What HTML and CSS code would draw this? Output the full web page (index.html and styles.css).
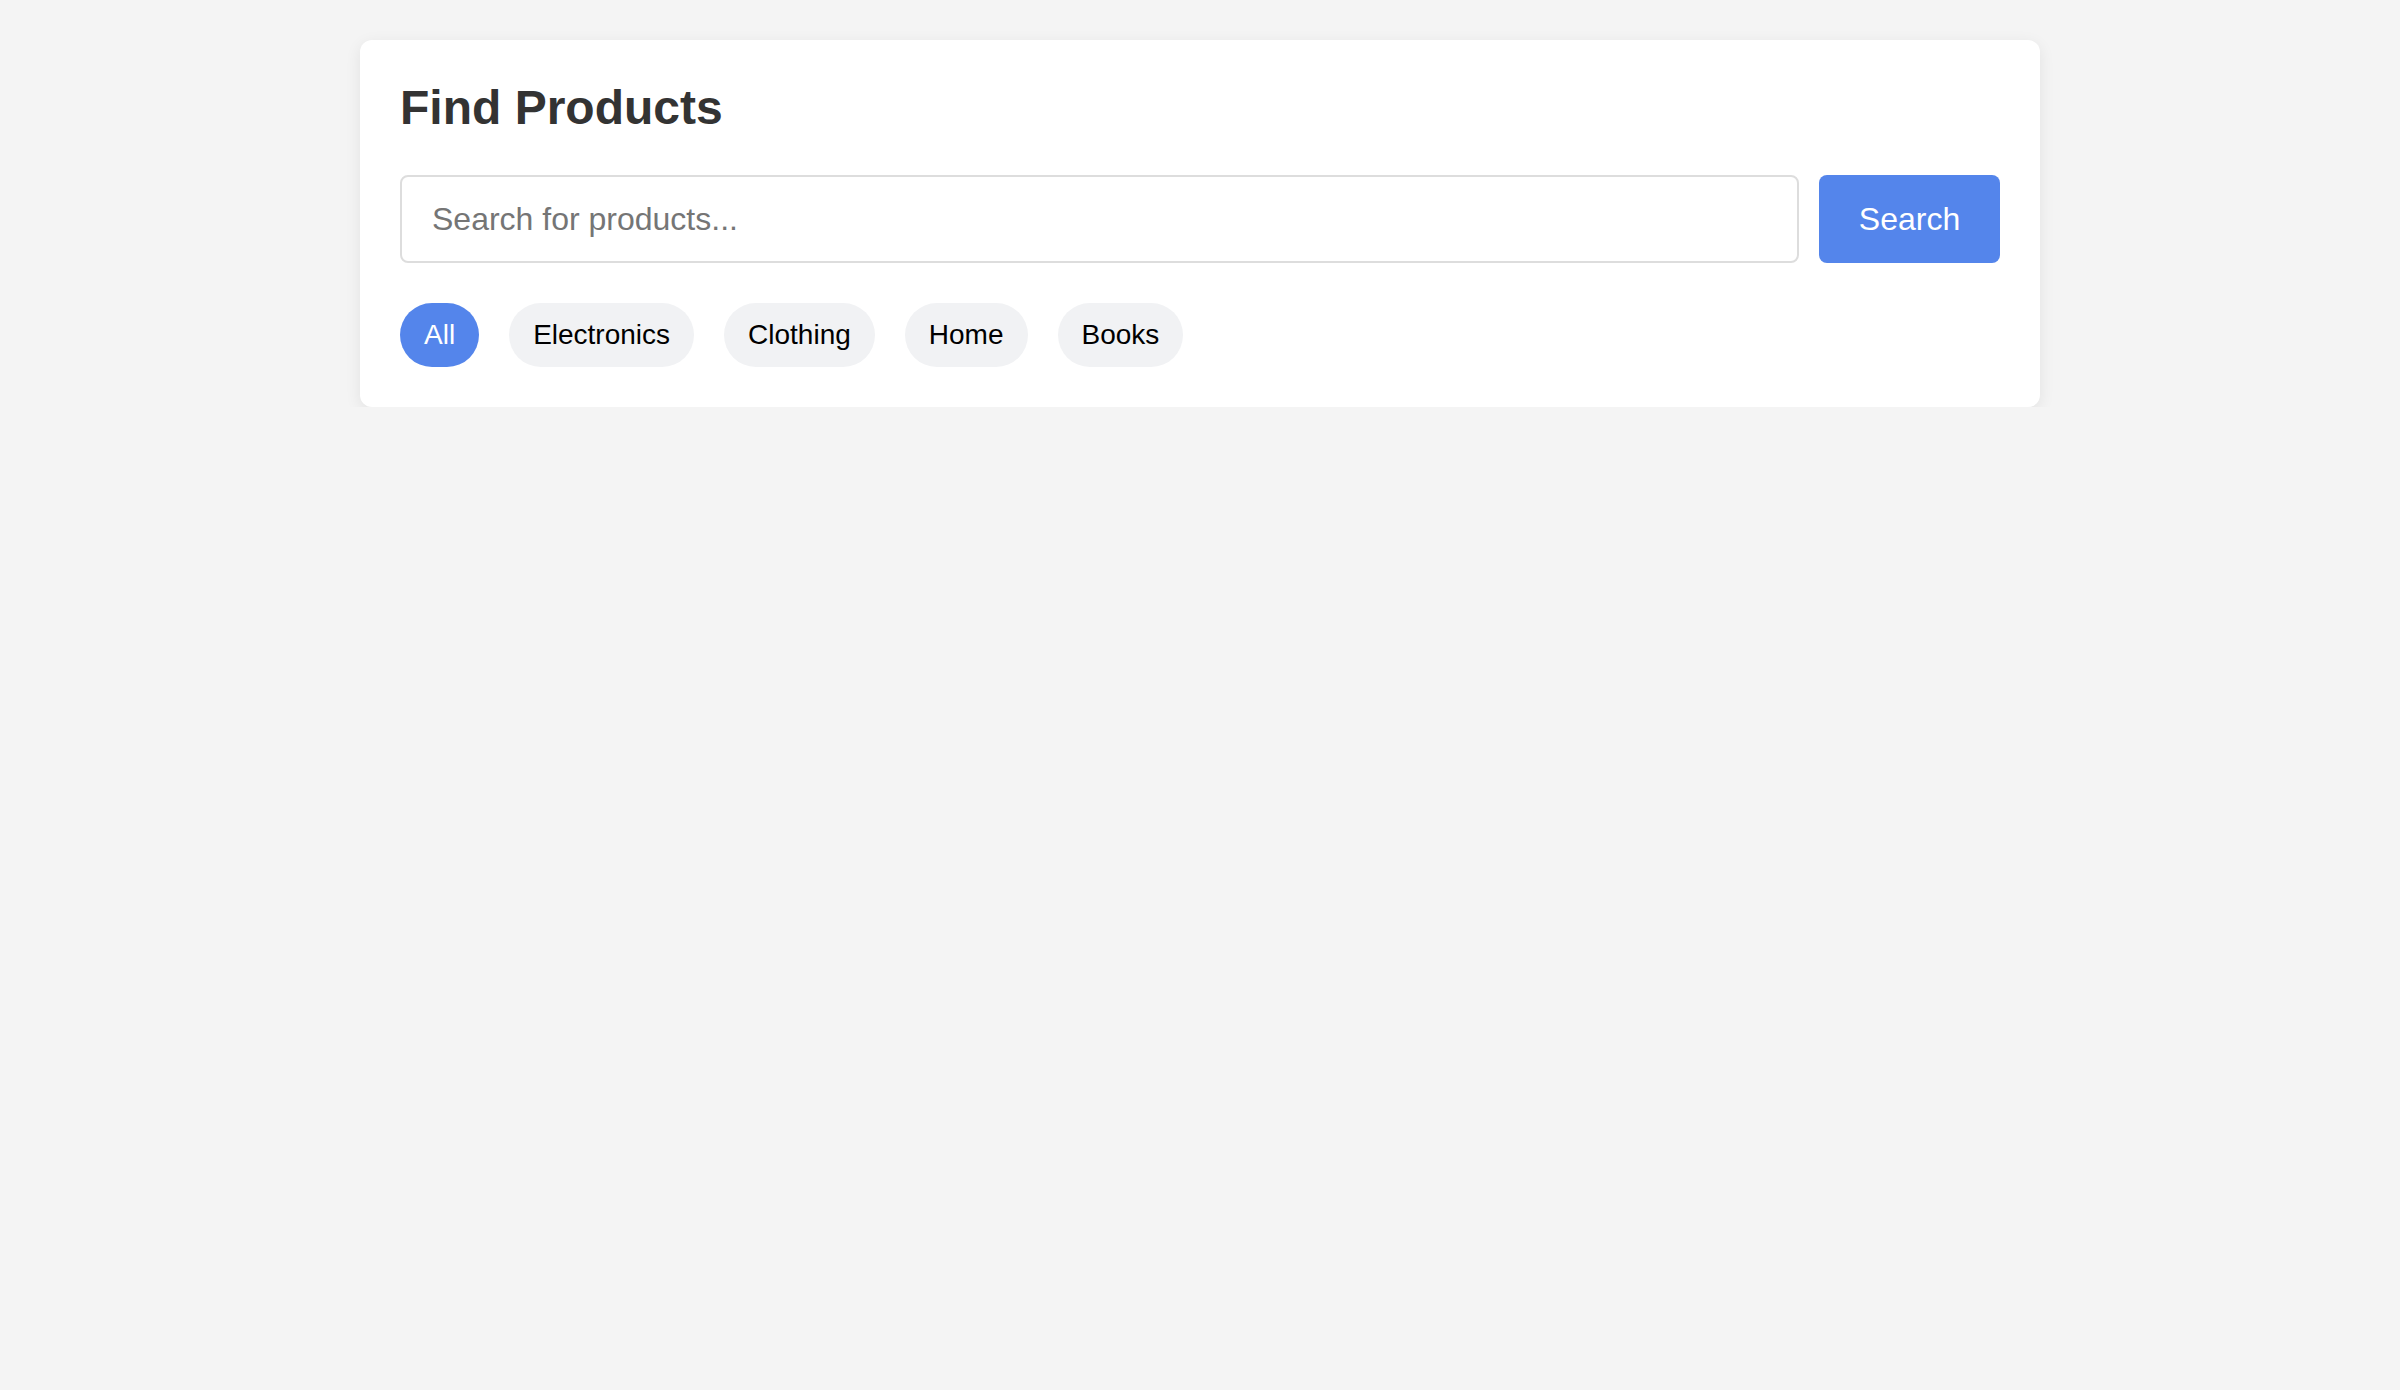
FILE: index.html
```html
<!DOCTYPE html>
<html lang="en">
<head>
<meta charset="utf-8">
<title>Find Products</title>
<link rel="stylesheet" href="styles.css">
</head>
<body>
<div class="card">
  <h1 class="title">Find Products</h1>
  <div class="search-row">
    <input class="search-input" type="text" placeholder="Search for products...">
    <button class="search-btn">Search</button>
  </div>
  <div class="chips">
    <button class="chip chip-active">All</button>
    <button class="chip">Electronics</button>
    <button class="chip">Clothing</button>
    <button class="chip">Home</button>
    <button class="chip">Books</button>
  </div>
</div>
</body>
</html>
```

FILE: styles.css
```css
html, body {
  margin: 0;
  padding: 0;
}
body {
  background: #f4f4f4;
  font-family: "Liberation Sans", Arial, Helvetica, sans-serif;
  padding-top: 40px;
}
.card {
  width: 1680px;
  box-sizing: border-box;
  margin: 0 auto;
  background: #ffffff;
  border-radius: 12px;
  padding: 40px;
  box-shadow: 0 4px 16px rgba(0, 0, 0, 0.08);
}
.title {
  margin: 0 0 40px 0;
  font-size: 48px;
  line-height: 55px;
  font-weight: bold;
  color: #333333;
}
.search-row {
  display: flex;
  gap: 20px;
}
.search-input {
  flex: 1;
  height: 88px;
  box-sizing: border-box;
  border: 2px solid #dddddd;
  border-radius: 8px;
  padding: 0 30px;
  font-family: inherit;
  font-size: 32px;
  color: #333;
  outline: none;
}
.search-input::placeholder {
  color: #757575;
}
.search-btn {
  width: 181px;
  height: 88px;
  border: none;
  border-radius: 8px;
  background: #5485eb;
  color: #ffffff;
  font-family: inherit;
  font-size: 32px;
  padding: 0;
}
.chips {
  display: flex;
  gap: 30px;
  margin-top: 40px;
}
.chip {
  height: 64px;
  padding: 0 24px;
  border: none;
  border-radius: 32px;
  background: #f1f2f4;
  color: #000000;
  font-family: inherit;
  font-size: 28px;
}
.chip-active {
  background: #5485eb;
  color: #ffffff;
}
```
